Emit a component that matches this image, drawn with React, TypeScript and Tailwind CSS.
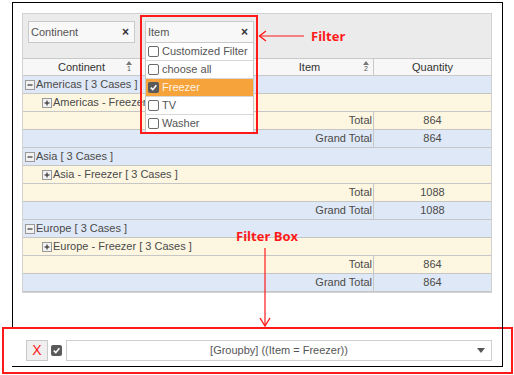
const font = { fontFamily: '"Liberation Sans", Arial, sans-serif' };

function Check({ on }: { on?: boolean }) {
  return on ? (
    <span className="inline-flex w-[11px] h-[11px] rounded-[2px] bg-[#5a5a5a] items-center justify-center shrink-0">
      <svg width="9" height="9" viewBox="0 0 10 10">
        <path d="M2 5.2 L4.2 7.4 L8.2 2.6" fill="none" stroke="#fff" strokeWidth="1.8" />
      </svg>
    </span>
  ) : (
    <span className="inline-block w-[11px] h-[11px] rounded-[2px] border border-[#6b6b6b] bg-white shrink-0" />
  );
}

function SortIcon({ n }: { n: string }) {
  return (
    <span className="flex flex-col items-center leading-none">
      <svg width="6" height="4" viewBox="0 0 6 4">
        <path d="M0 4 L3 0 L6 4 Z" fill="#777" />
      </svg>
      <span className="text-[7px] text-[#555] leading-[7px]">{n}</span>
    </span>
  );
}

function Toggle({ plus }: { plus?: boolean }) {
  return (
    <span className="inline-flex w-[10px] h-[10px] border border-[#999] bg-[#f2f2f2] items-center justify-center mr-[1px] shrink-0">
      <svg width="6" height="6" viewBox="0 0 6 6">
        <path d="M0.5 3 H5.5" stroke="#333" strokeWidth="1.2" />
        {plus && <path d="M3 0.5 V5.5" stroke="#333" strokeWidth="1.2" />}
      </svg>
    </span>
  );
}

function GroupRow({ label }: { label: string }) {
  return (
    <div className="h-[18px] bg-[#dfe8f6] border-b border-[#c6c6c6] flex items-center pl-[2px]">
      <Toggle />
      <span className="whitespace-pre">{label}</span>
    </div>
  );
}

function SubRow({ label }: { label: string }) {
  return (
    <div className="h-[18px] bg-[#fdf7e2] border-b border-[#c6c6c6] flex items-center pl-[19px]">
      <Toggle plus />
      <span className="whitespace-pre">{label}</span>
    </div>
  );
}

function TotalRow({ label, value, blue }: { label: string; value: string; blue?: boolean }) {
  return (
    <div className={`h-[18px] border-b border-[#c6c6c6] flex ${blue ? "bg-[#dfe8f6]" : "bg-[#fdf7e2]"}`}>
      <div className="w-[351px] border-r border-[#c6c6c6] text-right leading-[17px] pr-[1px]">{label}</div>
      <div className="flex-1 text-center leading-[17px]">{value}</div>
    </div>
  );
}

export default function App() {
  const groups = [
    { name: "Americas", value: "864" },
    { name: "Asia", value: "1088" },
    { name: "Europe", value: "864" },
  ];
  const options = [
    { label: "Customized Filter" },
    { label: "choose all" },
    { label: "Freezer", on: true },
    { label: "TV" },
    { label: "Washer" },
  ];

  return (
    <div className="relative w-[514px] h-[375px] bg-white overflow-hidden text-[11px] text-[#4a4a4a]" style={font}>
      {/* framed screenshot */}
      <div className="ml-[12px] mt-[2px] w-[491px] h-[366px] border border-black pt-[10px] pl-[9px]">
        <div className="w-[470px] border border-[#d2d2d2]">
          {/* filter area */}
          <div className="h-[44px] bg-[#ebebeb] flex gap-[10px] pl-[5px] pt-[7px]">
            <div className="w-[107px] h-[22px] bg-[#f8f8f8] border border-[#c9c9c9] flex items-center justify-between px-[2px]">
              <span className="text-[#555]">Continent</span>
              <span className="font-bold text-[12px] text-[#333] pr-[3px]">×</span>
            </div>
            <div className="relative w-[109px] h-[22px] bg-[#f8f8f8] border border-[#c9c9c9] flex items-center justify-between px-[2px] z-10">
              <span className="text-[#555]">Item</span>
              <span className="font-bold text-[12px] text-[#333] pr-[3px]">×</span>
              {/* dropdown */}
              <div className="absolute left-[-1px] top-[20px] w-[109px] bg-white border border-[#c9c9c9] flex flex-col">
                {options.map((o) => (
                  <div
                    key={o.label}
                    className={`h-[18px] flex items-center gap-[3px] pl-[2px] border-b border-[#d8d8d8] ${
                      o.on ? "bg-[#f6a33b] text-[#fff4e6]" : "bg-white text-[#555]"
                    }`}
                  >
                    <Check on={o.on} />
                    <span>{o.label}</span>
                  </div>
                ))}
              </div>
            </div>
          </div>

          {/* column headers */}
          <div className="h-[18px] flex bg-[#f7f7f7] border-y border-[#c9c9c9] text-[#333]">
            <div className="w-[118px] flex items-center justify-center relative border-r border-[#c9c9c9]">
              <span>Continent</span>
              <span className="absolute right-[8px] top-[2px]"><SortIcon n="1" /></span>
            </div>
            <div className="w-[105px] border-r border-[#c9c9c9]" />
            <div className="w-[128px] flex items-center justify-center relative border-r border-[#c9c9c9]">
              <span>Item</span>
              <span className="absolute right-[4px] top-[2px]"><SortIcon n="2" /></span>
            </div>
            <div className="flex-1 flex items-center justify-center">Quantity</div>
          </div>

          {/* rows */}
          {groups.map((g) => (
            <div key={g.name}>
              <GroupRow label={`${g.name} [ 3 Cases ]`} />
              <SubRow label={`${g.name} - Freezer [ 3 Cases ]`} />
              <TotalRow label="Total" value={g.value} />
              <TotalRow label="Grand Total" value={g.value} blue />
            </div>
          ))}
        </div>
      </div>

      {/* annotation: Filter */}
      <div className="absolute left-[140px] top-[15px] w-[118px] h-[119px] border-2 border-[#ff1a1a] z-20" />
      <div className="absolute left-[258px] top-[28px] flex items-center z-20">
        <svg width="48" height="12" viewBox="0 0 48 12">
          <path d="M1 6 H46" stroke="#ff1a1a" strokeWidth="1.2" />
          <path d="M8 1 L1.5 6 L8 11" fill="none" stroke="#ff1a1a" strokeWidth="1.4" />
        </svg>
        <span className="ml-[5px] text-[13px] font-bold text-[#ff1a1a] leading-[16px]" style={{ fontFamily: '"Open Sans", "Liberation Sans", sans-serif' }}>
          Filter
        </span>
      </div>

      {/* annotation: Filter Box */}
      <div className="absolute left-[236px] top-[227px] flex flex-col items-center z-20">
        <span className="text-[13px] font-bold text-[#ff1a1a] leading-[18px]" style={{ fontFamily: '"Open Sans", "Liberation Sans", sans-serif' }}>
          Filter Box
        </span>
      </div>
      <svg className="absolute left-[259px] top-[248px] z-20" width="12" height="80" viewBox="0 0 12 80">
        <path d="M6 0 V78" stroke="#ff1a1a" strokeWidth="1.2" />
        <path d="M1 70 L6 78 L11 70" fill="none" stroke="#ff1a1a" strokeWidth="1.4" />
      </svg>

      {/* annotation: bottom filter box */}
      <div className="absolute left-[2px] top-[327px] w-[511px] h-[47px] border-2 border-[#ff1a1a] bg-white flex items-center gap-[3px] pl-[22px] pr-[19px] z-10">
        <div className="w-[22px] h-[21px] bg-[#efefef] border border-[#c9c9c9] flex items-center justify-center text-[14px] text-[#ff2020]">
          X
        </div>
        <Check on />
        <div className="ml-[1px] flex-1 h-[21px] border border-[#cfcfcf] bg-white flex items-center relative">
          <span className="flex-1 text-center text-[#555] pl-[14px]">[Groupby] ((Item = Freezer))</span>
          <svg className="mr-[6px]" width="8" height="5" viewBox="0 0 8 5">
            <path d="M0 0 H8 L4 5 Z" fill="#555" />
          </svg>
        </div>
      </div>
      {/* black frame lines show through red box */}
      <div className="absolute left-[12px] top-[366px] w-[491px] h-[1px] bg-black z-10" />
      <div className="absolute left-[502px] top-[327px] w-[1px] h-[40px] bg-black z-10" />
    </div>
  );
}
